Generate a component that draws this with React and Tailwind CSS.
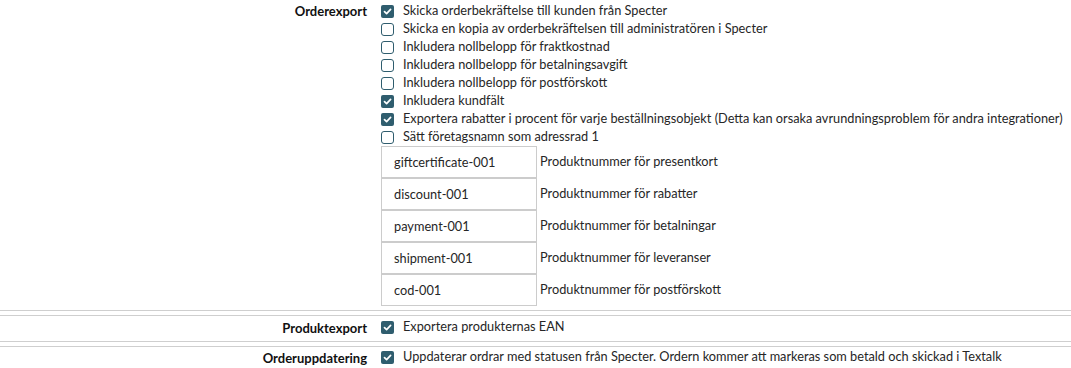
const font = { fontFamily: 'Lato, "Open Sans", sans-serif' };

function Box({ checked }) {
  if (checked) {
    return (
      <span className="inline-flex h-[13px] w-[13px] shrink-0 items-center justify-center rounded-[2px] bg-[#2f5d6e]">
        <svg width="9" height="9" viewBox="0 0 9 9">
          <path d="M1.5 4.6 L3.6 6.6 L7.6 2.4" fill="none" stroke="#fff" strokeWidth="1.7" strokeLinecap="round" strokeLinejoin="round" />
        </svg>
      </span>
    );
  }
  return <span className="inline-block h-[13px] w-[13px] shrink-0 rounded-[3px] border border-[#2f5d6e] bg-white" />;
}

function Check({ checked, children }) {
  return (
    <label className="flex h-[18px] items-center">
      <Box checked={checked} />
      <span className="ml-[9px] whitespace-nowrap">{children}</span>
    </label>
  );
}

function Row({ label, children, className }) {
  return (
    <div className={`flex ${className || ''}`}>
      <div className="w-[367px] shrink-0 pt-[1px] text-right text-[13px] font-bold leading-[18px] text-[#111]">{label}</div>
      <div className="ml-[14px]">{children}</div>
    </div>
  );
}

const options = [
  [true, 'Skicka orderbekräftelse till kunden från Specter'],
  [false, 'Skicka en kopia av orderbekräftelsen till administratören i Specter'],
  [false, 'Inkludera nollbelopp för fraktkostnad'],
  [false, 'Inkludera nollbelopp för betalningsavgift'],
  [false, 'Inkludera nollbelopp för postförskott'],
  [true, 'Inkludera kundfält'],
  [true, 'Exportera rabatter i procent för varje beställningsobjekt (Detta kan orsaka avrundningsproblem för andra integrationer)'],
  [false, 'Sätt företagsnamn som adressrad 1'],
];

const fields = [
  ['giftcertificate-001', 'Produktnummer för presentkort'],
  ['discount-001', 'Produktnummer för rabatter'],
  ['payment-001', 'Produktnummer för betalningar'],
  ['shipment-001', 'Produktnummer för leveranser'],
  ['cod-001', 'Produktnummer för postförskott'],
];

function Separator() {
  return <div className="h-[6px] border-y border-[#cfcfcf]" />;
}

export default function App() {
  return (
    <div className="min-h-[368px] w-[1071px] bg-white text-[12.75px] text-[#262626]" style={font}>
      <Row label="Orderexport" className="pt-[1px] pb-[4px]">
        <div className="pt-[1px]">
          {options.map(([c, t]) => (
            <Check key={t} checked={c}>{t}</Check>
          ))}
        </div>
        <div>
          {fields.map(([v, l]) => (
            <div key={v} className="flex items-center">
              <input
                readOnly
                value={v}
                className="h-[32px] w-[156px] border border-[#cccccc] bg-white px-[12px] text-[12.75px] text-[#262626] outline-none"
                style={font}
              />
              <span className="ml-[3px]">{l}</span>
            </div>
          ))}
        </div>
      </Row>
      <Separator />
      <Row label="Produktexport" className="pt-[2px] pb-[4px]">
        <Check checked>Exportera produkternas EAN</Check>
      </Row>
      <Separator />
      <Row label="Orderuppdatering" className="pt-[1px]">
        <Check checked>Uppdaterar ordrar med statusen från Specter. Ordern kommer att markeras som betald och skickad i Textalk</Check>
      </Row>
    </div>
  );
}
